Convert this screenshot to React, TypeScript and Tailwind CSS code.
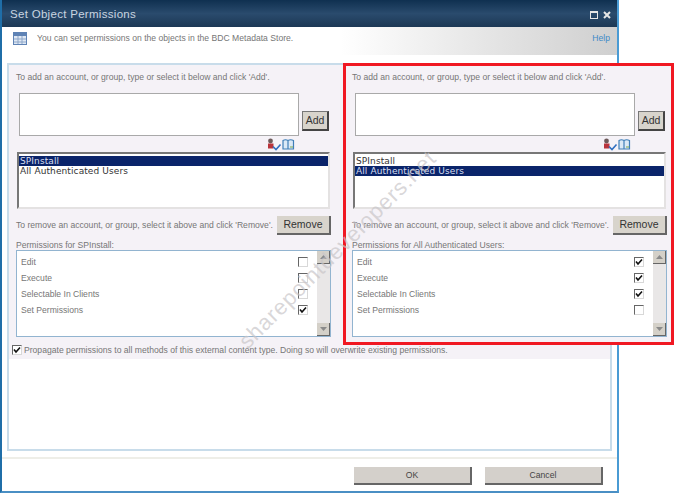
const FONT = "font-['Liberation_Sans',sans-serif]";

type Perm = { label: string; checked: boolean };

const Check = ({ checked }: { checked: boolean }) => (
  <span className="flex h-[10px] w-[10px] items-center justify-center border border-b-[#d8d8d8] border-l-[#666666] border-r-[#d8d8d8] border-t-[#666666] bg-white">
    {checked && (
      <svg width="8" height="8" viewBox="0 0 8 8">
        <path d="M1 3.5 L3 6 L7 1.5" fill="none" stroke="#111111" strokeWidth="1.6" />
      </svg>
    )}
  </span>
);

const PeopleIcons = () => (
  <svg width="28" height="13" viewBox="0 0 28 13">
    <circle cx="3.5" cy="3" r="2.4" fill="#6d5a5a" />
    <rect x="1" y="5.5" width="5.5" height="5" fill="#b8343c" />
    <path d="M6 8.5 L9 11.5 L13.5 6.5" fill="none" stroke="#2f6fc0" strokeWidth="1.6" />
    <path d="M16 2.5 Q18.5 1 21 2.5 Q23.5 1 26.5 2.5 V11 H16 Z M21 2.5 V11" fill="#dbe9f6" stroke="#3f7fb8" strokeWidth="1.2" />
    <path d="M23 9 H26" stroke="#7aa84a" strokeWidth="1" />
  </svg>
);

const ScrollArrow = ({ up }: { up: boolean }) => (
  <div className="flex h-[13px] w-[13px] items-center justify-center border-b border-r border-b-[#666666] border-r-[#666666] bg-[#d4d0c8]">
    <svg width="7" height="4" viewBox="0 0 7 4">
      <path d={up ? "M0 4 L3.5 0 L7 4 Z" : "M0 0 L7 0 L3.5 4 Z"} fill="#8a8a8a" />
    </svg>
  </div>
);

const Panel = ({
  selected,
  title,
  perms,
}: {
  selected: number;
  title: string;
  perms: Perm[];
}) => {
  const users = ["SPInstall", "All Authenticated Users"];
  return (
    <div className={`flex w-[315px] flex-col ${FONT} text-[8.6px] text-[#767676]`}>
      <p className="h-[11px] leading-[11px]">
        To add an account, or group, type or select it below and click 'Add'.
      </p>
      <div className="mt-[10px] flex items-end pl-[3px]">
        <div className="h-[43px] w-[280px] border border-[#a9a9a9] bg-white" />
        <button className="mb-[5px] ml-[3px] h-[20px] w-[27px] border border-b-2 border-r-2 border-[#444444] border-l-[#777777] border-t-[#777777] bg-[#d8d4cc] text-[10.5px] text-[#333333]">
          Add
        </button>
      </div>
      <div className="flex h-[16px] items-center pl-[251px]">
        <PeopleIcons />
      </div>
      <div className="ml-[1px] h-[57px] w-[313px] border-2 border-b-[#e4e2e2] border-l-[#777777] border-r-[#e4e2e2] border-t-[#777777] bg-white pt-[2px] font-['DejaVu_Sans',sans-serif] text-[9px] leading-[10px] tracking-[0.1px] text-[#333333]">
        {users.map((u, i) => (
          <div
            key={u}
            className={i === selected ? "bg-[#0a246a] pl-[1px] text-[#d8dff0]" : "pl-[1px]"}
          >
            {u}
          </div>
        ))}
      </div>
      <div className="mt-[7px] flex h-[19px] items-center justify-between">
        <span>To remove an account, or group, select it above and click 'Remove'.</span>
        <button className="h-[19px] w-[54px] border-b-2 border-r-2 border-b-[#666666] border-r-[#666666] bg-[#d8d4cc] text-[10.5px] text-[#333333]">
          Remove
        </button>
      </div>
      <p className="mt-[6px] h-[8px] leading-[8px]">{title}</p>
      <div className="mt-[1px] flex h-[87px] border border-[#92b4d0] bg-white">
        <div className="flex-1 pl-[4px] pt-[3px]">
          {perms.map((p) => (
            <div key={p.label} className="flex h-[16px] items-center justify-between pr-[9px]">
              <span>{p.label}</span>
              <Check checked={p.checked} />
            </div>
          ))}
        </div>
        <div className="flex w-[13px] flex-col justify-between bg-[#e9e7e7]">
          <ScrollArrow up />
          <ScrollArrow up={false} />
        </div>
      </div>
    </div>
  );
};

const leftPerms: Perm[] = [
  { label: "Edit", checked: false },
  { label: "Execute", checked: false },
  { label: "Selectable In Clients", checked: false },
  { label: "Set Permissions", checked: true },
];

const rightPerms: Perm[] = [
  { label: "Edit", checked: true },
  { label: "Execute", checked: true },
  { label: "Selectable In Clients", checked: true },
  { label: "Set Permissions", checked: false },
];

const App = () => {
  return (
    <div className={`relative h-[493px] w-[680px] overflow-hidden bg-white ${FONT}`}>
      <div className="flex h-[493px] w-[619px] flex-col border-b-2 border-l-2 border-r-2 border-b-[#4a8fc4] border-l-[#1f6ea8] border-r-[#4a9bd4]">
        {/* title bar */}
        <div className="flex h-[27px] shrink-0 items-center justify-between bg-gradient-to-b from-[#0f3050] via-[#2a4b6d] to-[#1c3855] pl-[8px] pr-[6px] pt-[2px]">
          <span className="text-[11.5px] tracking-[0.3px] text-[#c9d5e0]">Set Object Permissions</span>
          <div className="flex items-center gap-[5px]">
            <span className="h-[8px] w-[8px] border border-t-2 border-[#e6e6e6]" />
            <svg width="8" height="8" viewBox="0 0 8 8">
              <path d="M1 1 L7 7 M7 1 L1 7" stroke="#e6e6e6" strokeWidth="2" />
            </svg>
          </div>
        </div>

        {/* description band */}
        <div className="flex h-[28px] shrink-0 items-center bg-gradient-to-r from-white from-55% to-[#cfcfcf] pb-[5px] pl-[11px] pr-[7px] text-[8.6px] text-[#767676]">
          <svg width="14" height="13" viewBox="0 0 14 13">
            <rect x="0.5" y="0.5" width="13" height="12" fill="#dfe8f4" stroke="#5f83b5" />
            <rect x="1" y="1" width="12" height="3" fill="#5f83b5" />
            <path d="M5 4 V12 M9 4 V12 M1 7 H13 M1 10 H13" stroke="#8ea7c9" strokeWidth="1" />
          </svg>
          <span className="ml-[10px] flex-1">You can set permissions on the objects in the BDC Metadata Store.</span>
          <span className="text-[#3d8ac8]">Help</span>
        </div>

        {/* content */}
        <div className="mx-[5px] mt-[8px] h-[388px] shrink-0 border-2 border-[#c8dcea] bg-white">
          <div className="h-[294px] bg-[#f5f2f7]">
            <div className="pl-[7px] pt-[7px]">
              <Panel selected={0} title="Permissions for SPInstall:" perms={leftPerms} />
            </div>
            <label className="mt-[7px] flex items-center gap-[2px] pl-[3px] text-[8.6px] text-[#767676]">
              <Check checked />
              <span>
                Propagate permissions to all methods of this external content type. Doing so will overwrite existing permissions.
              </span>
            </label>
          </div>
        </div>

        {/* footer */}
        <div className="mt-[6px] flex flex-1 items-start justify-end gap-[13px] border-t-2 border-t-[#eeeee8] pr-[14px] pt-[8px] text-[8.6px] text-[#444444]">
          <button className="h-[18px] w-[118px] border-b-2 border-r-2 border-b-[#666666] border-r-[#666666] bg-[#d4d0cb]">OK</button>
          <button className="h-[18px] w-[118px] border-b-2 border-r-2 border-b-[#666666] border-r-[#666666] bg-[#d4d0cb]">Cancel</button>
        </div>
      </div>

      {/* annotation box pasted over the screenshot */}
      <div className="absolute left-[343px] top-[63px] h-[282px] w-[331px] border-[3px] border-[#f01822] bg-[#f5f2f7] pl-[6px] pt-[6px]">
        <Panel selected={1} title="Permissions for All Authenticated Users:" perms={rightPerms} />
      </div>

      {/* watermark */}
      <span className="absolute left-[203px] top-[233px] -rotate-[45deg] whitespace-nowrap text-[22px] tracking-[0.9px] text-[#c8c5c8]/70">
        sharepointdevelopers.net
      </span>
    </div>
  );
};

export default App;
